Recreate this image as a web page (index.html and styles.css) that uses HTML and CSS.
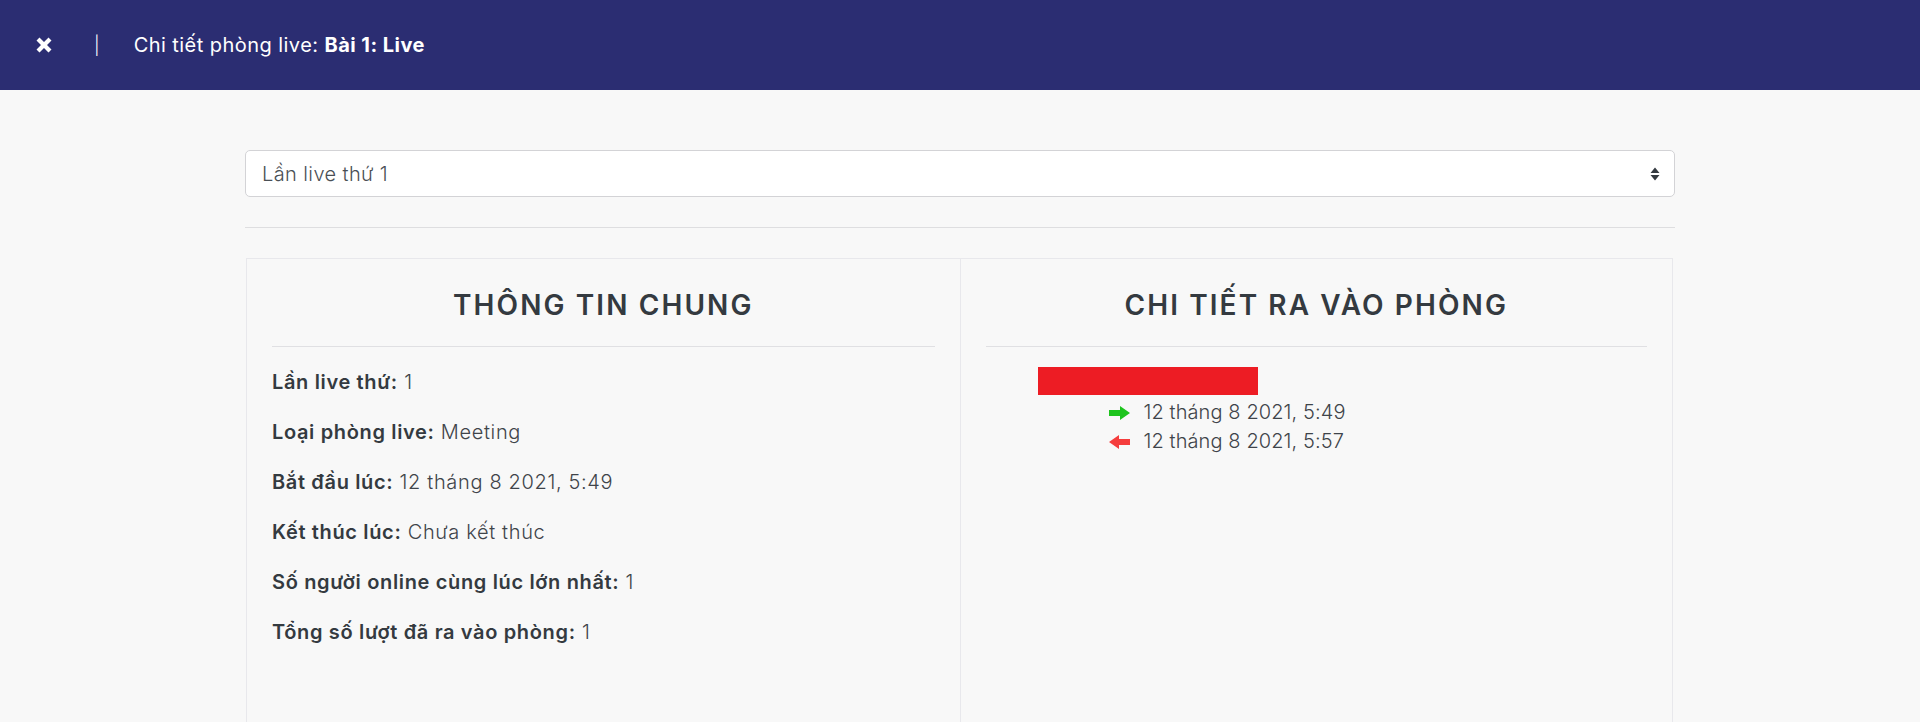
FILE: index.html
```html
<!DOCTYPE html>
<html lang="vi">
<head>
<meta charset="utf-8">
<title>Chi tiết phòng live</title>
<link rel="stylesheet" href="styles.css">
</head>
<body>
<header class="topbar">
  <button class="close-btn" aria-label="Đóng">
    <svg width="16" height="16" viewBox="0 0 16 16"><path d="M0.5 3.5 3.5 0.5 8 5 12.5 0.5 15.5 3.5 11 8 15.5 12.5 12.5 15.5 8 11 3.5 15.5 0.5 12.5 5 8Z" fill="#fff"/></svg>
  </button>
  <span class="sep">|</span>
  <span class="title">Chi tiết phòng live: <b>Bài 1: Live</b></span>
</header>
<main class="container">
  <div class="select-wrap">
    <select class="select">
      <option>Lần live thứ 1</option>
    </select>
    <svg class="select-icon" width="10" height="14" viewBox="0 0 10 14"><path d="M5 0.5 9.5 6H0.5Z M0.5 8H9.5L5 13.5Z" fill="#343a40"/></svg>
  </div>
  <hr class="divider">
  <section class="panels">
    <div class="panel">
      <h2 class="panel-title">THÔNG TIN CHUNG</h2>
      <p class="row"><b>Lần live thứ:</b> 1</p>
      <p class="row"><b>Loại phòng live:</b> Meeting</p>
      <p class="row"><b>Bắt đầu lúc:</b> 12 tháng 8 2021, 5:49</p>
      <p class="row"><b>Kết thúc lúc:</b> Chưa kết thúc</p>
      <p class="row"><b>Số người online cùng lúc lớn nhất:</b> 1</p>
      <p class="row"><b>Tổng số lượt đã ra vào phòng:</b> 1</p>
    </div>
    <div class="panel">
      <h2 class="panel-title">CHI TIẾT RA VÀO PHÒNG</h2>
      <div class="user">
        <div class="user-name"></div>
        <ul class="events">
          <li class="event">
            <svg class="arrow" width="21" height="14" viewBox="0 0 21 14"><path d="M0 4H11V0L21 7 11 14V10H0Z" fill="#1ec41e"/></svg>
            <span>12 tháng 8 2021, 5:49</span>
          </li>
          <li class="event">
            <svg class="arrow" width="21" height="14" viewBox="0 0 21 14"><path d="M21 4H10V0L0 7 10 14V10H21Z" fill="#f53d3d"/></svg>
            <span>12 tháng 8 2021, 5:57</span>
          </li>
        </ul>
      </div>
    </div>
  </section>
</main>
</body>
</html>
```

FILE: styles.css
```css
* { box-sizing: border-box; }
html, body { margin: 0; padding: 0; }
body {
  background: #f8f8f8;
  font-family: Inter, "Open Sans", "DejaVu Sans", sans-serif;
  color: #343a40;
}
.topbar {
  height: 90px;
  background: #2b2d72;
  color: #fff;
  display: flex;
  align-items: center;
  padding-left: 36px;
}
.close-btn {
  background: none;
  border: 0;
  padding: 0;
  width: 16px;
  height: 16px;
  display: flex;
  cursor: pointer;
}
.sep {
  margin-left: 42px;
  font-size: 18px;
  font-weight: 300;
}
.title {
  margin-left: 34px;
  font-size: 20px;
  letter-spacing: 0.45px;
  font-weight: 400;
}
.title b { font-weight: 700; }
.container {
  width: 1430px;
  margin: 0 auto;
  padding-top: 60px;
}
.select-wrap { position: relative; }
.select {
  appearance: none;
  -webkit-appearance: none;
  display: block;
  width: 100%;
  height: 47px;
  border: 1px solid #d3d3d6;
  border-radius: 5px;
  background: #fff;
  padding: 0 16px;
  font-family: inherit;
  font-size: 20px;
  letter-spacing: 0.4px;
  font-weight: 300;
  color: #4a4f55;
}
.select-icon {
  position: absolute;
  right: 15px;
  top: 17px;
}
.divider {
  border: 0;
  border-top: 1px solid #dedee0;
  margin: 30px 0;
}
.panels {
  display: grid;
  grid-template-columns: 1fr 1fr;
  border: 1px solid #e8e8ec;
  margin-left: 1px;
  margin-right: 2px;
  min-height: 520px;
}
.panel {
  padding: 0 25px;
}
.panel + .panel { border-left: 1px solid #e8e8ec; }
.panel-title {
  margin: 0;
  padding: 26px 0 21px;
  font-size: 28px;
  font-weight: 600;
  letter-spacing: 2.1px;
  line-height: 40px;
  text-align: center;
  border-bottom: 1px solid #e0e0e3;
  color: #343a40;
}
.row {
  margin: 0;
  font-size: 20px;
  letter-spacing: 0.65px;
  line-height: 50px;
  font-weight: 300;
  color: #3f444a;
}
.row:first-of-type { margin-top: 10px; }
.row b { font-weight: 600; color: #343a40; }
.user { padding: 20px 0 0 52px; }
.user-name {
  width: 220px;
  height: 28px;
  background: #ed1c24;
}
.events {
  list-style: none;
  margin: 3px 0 0;
  padding: 0 0 0 71px;
}
.event {
  display: flex;
  align-items: center;
  gap: 14px;
  font-size: 20px;
  letter-spacing: 0.1px;
  line-height: 29px;
  font-weight: 300;
  color: #3f444a;
}
```
